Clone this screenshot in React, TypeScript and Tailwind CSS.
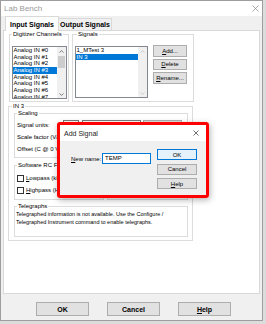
import React from "react";

const listItems = ["Analog IN #0", "Analog IN #1", "Analog IN #2", "Analog IN #3", "Analog IN #4", "Analog IN #5", "Analog IN #6", "Analog IN #7"];

function Up({ color }: { color: string }) {
  return (
    <svg width="5" height="3" viewBox="0 0 5 3">
      <path d="M0.5 2.6L2.5 0.6L4.5 2.6" fill="none" stroke={color} strokeWidth="0.8" />
    </svg>
  );
}
function Down({ color }: { color: string }) {
  return (
    <svg width="5" height="3" viewBox="0 0 5 3">
      <path d="M0.5 0.4L2.5 2.4L4.5 0.4" fill="none" stroke={color} strokeWidth="0.8" />
    </svg>
  );
}

function Btn({ children, className }: { children: React.ReactNode; className: string }) {
  return (
    <div className={"flex items-center justify-center border border-[#adadad] bg-[#e1e1e1] text-[6px] leading-none text-black " + className}>
      {children}
    </div>
  );
}

export default function App() {
  return (
    <div className="relative w-[266px] h-[324px] overflow-hidden bg-[#dcdcdc] font-['Liberation_Sans',Arial,sans-serif] text-black">
      <div className="w-[263px] h-[321px] border border-[#9e9e9e] bg-[#f0f0f0] flex flex-col">
        {/* title bar */}
        <div className="h-[15px] bg-white flex items-center justify-between pl-[3px] pr-[3px]">
          <span className="text-[8px] leading-none text-[#9a9a9a]">Lab Bench</span>
          <svg width="7" height="7" viewBox="0 0 7 7">
            <path d="M0.5 0.5L6.5 6.5M6.5 0.5L0.5 6.5" stroke="#8a8a8a" strokeWidth="0.7" />
          </svg>
        </div>

        <div className="flex flex-col pl-[2px]">
          {/* tabs */}
          <div className="h-[14px] flex items-start pl-[2px]">
            <div className="relative z-10 h-[15px] w-[54px] bg-white border border-b-0 border-[#d9d9d9] flex items-center justify-center text-[7px] leading-none font-bold whitespace-nowrap">
              Input Signals
            </div>
            <div className="mt-[2px] -ml-px h-[12px] w-[54px] bg-[#f0f0f0] border border-b-0 border-[#d9d9d9] flex items-center justify-center text-[7px] leading-none font-bold whitespace-nowrap">
              Output Signals
            </div>
          </div>

          {/* panel */}
          <div className="w-[257px] h-[264px] border border-[#d9d9d9] bg-white flex flex-col">
            {/* top row */}
            <div className="flex ml-[5px]">
              <fieldset className="w-[60px] h-[71px] min-w-0 border border-[#dcdcdc]">
                <legend className="ml-[2px] px-[1px] text-[6px] leading-[7px] whitespace-nowrap">Digitizer Channels</legend>
                <div className="ml-[2px] mt-[8px] w-[55px] h-[53px] border border-[#828790] bg-white flex overflow-hidden">
                  <div className="flex-1 flex flex-col overflow-hidden">
                    {listItems.map((t, i) => (
                      <div
                        key={t}
                        className={
                          "h-[6.67px] shrink-0 text-[6px] leading-[6.67px] pl-[0.5px] whitespace-nowrap " +
                          (i === 3 ? "bg-[#0078d7] text-white" : "")
                        }
                      >
                        {t}
                      </div>
                    ))}
                  </div>
                  <div className="w-[9px] bg-[#f0f0f0] flex flex-col items-center">
                    <div className="h-[8px] flex items-center justify-center"><Up color="#606060" /></div>
                    <div className="mt-[1px] w-[7px] h-[12px] bg-[#cdcdcd]" />
                    <div className="flex-1" />
                    <div className="h-[8px] flex items-center justify-center"><Down color="#606060" /></div>
                  </div>
                </div>
              </fieldset>

              <fieldset className="ml-[3px] w-[122px] h-[71px] min-w-0 border border-[#dcdcdc]">
                <legend className="ml-[4px] px-[1px] text-[6px] leading-[7px] whitespace-nowrap">Signals</legend>
                <div className="flex ml-[2px] mt-[8px]">
                  <div className="w-[73px] h-[52px] border border-[#828790] bg-white flex overflow-hidden">
                    <div className="flex-1 flex flex-col">
                      <div className="h-[6.67px] text-[6px] leading-[6.67px] pl-[0.5px] whitespace-nowrap">1_MTest 3</div>
                      <div className="h-[6.67px] text-[6px] leading-[6.67px] pl-[0.5px] whitespace-nowrap bg-[#0078d7] text-white">IN 3</div>
                    </div>
                    <div className="w-[9px] bg-[#f0f0f0] flex flex-col items-center">
                      <div className="h-[8px] flex items-center justify-center"><Up color="#c2c2c2" /></div>
                      <div className="flex-1" />
                      <div className="h-[8px] flex items-center justify-center"><Down color="#c2c2c2" /></div>
                    </div>
                  </div>
                  <div className="ml-[5px] -mt-[1px] flex flex-col gap-[2px]">
                    <Btn className="w-[34px] h-[11.5px]"><span><u>A</u>dd...</span></Btn>
                    <Btn className="w-[34px] h-[11.5px]"><span><u>D</u>elete</span></Btn>
                    <Btn className="w-[34px] h-[11.5px]"><span><u>R</u>ename...</span></Btn>
                  </div>
                </div>
              </fieldset>
            </div>

            {/* IN 3 group */}
            <fieldset className="ml-[4px] mt-[1px] w-[185px] h-[138px] min-w-0 border border-[#dcdcdc]">
              <legend className="ml-[3px] px-[1px] text-[6px] leading-[7px] whitespace-nowrap">IN 3</legend>

              <fieldset className="ml-[5px] w-[174px] h-[48px] min-w-0 border border-[#dcdcdc]">
                <legend className="ml-[2px] px-[1px] text-[6px] leading-[7px] whitespace-nowrap">Scaling</legend>
                <div className="mt-[2px] flex flex-col pl-[2px]">
                  <div className="h-[12px] flex items-center">
                    <span className="w-[46px] text-[6px] leading-none whitespace-nowrap">Signal units:</span>
                    <div className="w-[16px] h-[10px] border border-[#7a7a7a] bg-white" />
                    <div className="ml-[3px] w-[59px] h-[10px] border border-[#7a7a7a] bg-white text-[6px] leading-[8px] pl-[2px]">V/°C</div>
                    <Btn className="ml-[2px] w-[39px] h-[10px]"><span>Digitize</span></Btn>
                  </div>
                  <div className="h-[12px] flex items-center">
                    <span className="w-[63px] text-[6px] leading-none whitespace-nowrap">Scale factor (V/°C):</span>
                    <div className="w-[59px] h-[10px] border border-[#7a7a7a] bg-white" />
                  </div>
                  <div className="h-[12px] flex items-center">
                    <span className="w-[63px] text-[6px] leading-none whitespace-nowrap">Offset (C @ 0 V):</span>
                    <div className="w-[59px] h-[10px] border border-[#7a7a7a] bg-white" />
                  </div>
                </div>
              </fieldset>

              <div className="flex ml-[5px] mt-[4px]">
                <fieldset className="w-[90px] h-[38px] min-w-0 border border-[#dcdcdc]">
                  <legend className="ml-[2px] px-[1px] text-[6px] leading-[7px] whitespace-nowrap">Software RC Filter</legend>
                  <div className="mt-[3px] flex flex-col pl-[2px]">
                    <div className="h-[12px] flex items-center">
                      <div className="w-[7px] h-[7px] border border-[#333333] bg-white" />
                      <span className="ml-[2px] text-[6px] leading-none whitespace-nowrap"><u>L</u>owpass (kHz)</span>
                    </div>
                    <div className="h-[12px] flex items-center">
                      <div className="w-[7px] h-[7px] border border-[#333333] bg-white" />
                      <span className="ml-[2px] text-[6px] leading-none whitespace-nowrap"><u>H</u>ighpass (Hz)</span>
                    </div>
                  </div>
                </fieldset>
                <fieldset className="ml-[3px] w-[81px] h-[38px] min-w-0 border border-[#dcdcdc]">
                  <legend className="ml-[2px] px-[1px] text-[6px] leading-[7px] whitespace-nowrap">Hardware</legend>
                </fieldset>
              </div>

              <fieldset className="ml-[5px] mt-[3px] w-[174px] h-[34px] min-w-0 border border-[#dcdcdc]">
                <legend className="ml-[2px] px-[1px] text-[6px] leading-[7px] whitespace-nowrap">Telegraphs</legend>
                <div className="pl-[1px] text-[5.5px] leading-[8px] whitespace-nowrap">
                  Telegraphed information is not available. Use the Configure /
                  <br />
                  Telegraphed Instrument command to enable telegraphs.
                </div>
              </fieldset>
            </fieldset>
          </div>

          {/* bottom buttons */}
          <div className="mt-[8px] ml-[33px] flex gap-[18px]">
            <Btn className="w-[53px] h-[14px] !text-[7px] font-bold">OK</Btn>
            <Btn className="w-[53px] h-[14px] !text-[7px] font-bold">Cancel</Btn>
            <Btn className="w-[53px] h-[14px] !text-[7px] font-bold"><span><u>H</u>elp</span></Btn>
          </div>
        </div>
      </div>

      {/* Add Signal modal with red highlight */}
      <div className="absolute left-[57px] top-[122px] w-[152px] h-[76px] border-[3px] border-[#ff0000] rounded-[3px] shadow-[1px_2px_6px_rgba(0,0,0,0.3)] flex flex-col overflow-hidden">
        <div className="h-[16px] bg-white flex items-center justify-between pl-[4px] pr-[7px]">
          <span className="text-[7px] leading-none text-[#222222]">Add Signal</span>
          <svg width="6" height="6" viewBox="0 0 6 6">
            <path d="M0.5 0.5L5.5 5.5M5.5 0.5L0.5 5.5" stroke="#333333" strokeWidth="0.7" />
          </svg>
        </div>
        <div className="flex-1 bg-[#f0f0f0] flex pl-[11px] pr-[9px] pt-[8px] justify-between">
          <div className="mt-[4px] h-[11px] flex items-center">
            <span className="w-[28px] text-[6px] leading-none whitespace-nowrap"><u>N</u>ew name:</span>
            <div className="ml-[3px] w-[49px] h-[11px] border border-[#0078d7] bg-white text-[6px] leading-[9px] pl-[2px]">TEMP</div>
          </div>
          <div className="flex flex-col gap-[3.5px]">
            <div className="w-[40px] h-[11px] border border-[#0078d7] bg-[#e5f1fb] flex items-center justify-center text-[6px] leading-none">OK</div>
            <Btn className="w-[40px] h-[11px]">Cancel</Btn>
            <Btn className="w-[40px] h-[11px]"><span><u>H</u>elp</span></Btn>
          </div>
        </div>
      </div>
    </div>
  );
}
